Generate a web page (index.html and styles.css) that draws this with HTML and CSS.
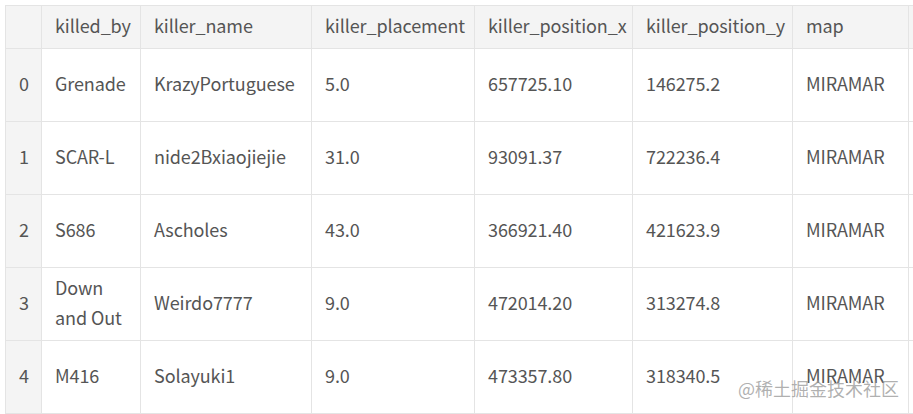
FILE: index.html
```html
<!DOCTYPE html>
<html>
<head>
<meta charset="utf-8">
<link rel="stylesheet" href="styles.css">
</head>
<body>
<div class="wrap">
<table class="df">
  <colgroup>
    <col class="c-idx"><col class="c-kb"><col class="c-kn"><col class="c-kp"><col class="c-px"><col class="c-py"><col class="c-map"><col class="c-more">
  </colgroup>
  <thead>
    <tr><th class="idx"></th><th>killed_by</th><th>killer_name</th><th>killer_placement</th><th>killer_position_x</th><th>killer_position_y</th><th>map</th><th></th></tr>
  </thead>
  <tbody>
    <tr><td class="idx">0</td><td>Grenade</td><td>KrazyPortuguese</td><td>5.0</td><td>657725.10</td><td>146275.2</td><td>MIRAMAR</td><td></td></tr>
    <tr><td class="idx">1</td><td>SCAR-L</td><td>nide2Bxiaojiejie</td><td>31.0</td><td>93091.37</td><td>722236.4</td><td>MIRAMAR</td><td></td></tr>
    <tr><td class="idx">2</td><td>S686</td><td>Ascholes</td><td>43.0</td><td>366921.40</td><td>421623.9</td><td>MIRAMAR</td><td></td></tr>
    <tr><td class="idx">3</td><td>Down and Out</td><td>Weirdo7777</td><td>9.0</td><td>472014.20</td><td>313274.8</td><td>MIRAMAR</td><td></td></tr>
    <tr><td class="idx">4</td><td>M416</td><td>Solayuki1</td><td>9.0</td><td>473357.80</td><td>318340.5</td><td>MIRAMAR</td><td></td></tr>
  </tbody>
</table>
<div class="mark">@稀土掘金技术社区</div>
</div>
</body>
</html>
```
FILE: styles.css
```css
html, body {
  margin: 0;
  padding: 0;
  background: #ffffff;
  overflow: hidden;
}
.wrap {
  padding: 5px 0 0 5px;
  width: 1100px;
  position: relative;
}
.df {
  border-collapse: collapse;
  table-layout: fixed;
  width: 1040px;
  font-family: "Noto Sans CJK JP", "Noto Sans", sans-serif;
  font-size: 18px;
  color: #555555;
}
.c-idx { width: 36px; }
.c-kb { width: 99px; }
.c-kn { width: 171px; }
.c-kp { width: 163px; }
.c-px { width: 158px; }
.c-py { width: 160px; }
.c-map { width: 116px; }
.c-more { width: 137px; }
.df th, .df td {
  border: 1px solid #e4e4e4;
  padding: 0 13px 4px 13px;
  text-align: left;
  vertical-align: middle;
  font-weight: 400;
  line-height: 30px;
  letter-spacing: -0.1px;
}
.df th {
  background: #f4f4f4;
  height: 38px;
}
.df td {
  height: 68px;
}
.df .idx {
  background: #f4f4f4;
  padding: 0 0 4px 13px;
}
.mark {
  position: absolute;
  left: 738px;
  top: 375px;
  font-family: "Noto Sans CJK SC", sans-serif;
  font-size: 18px;
  color: rgba(150, 150, 150, 0.75);
}
```
